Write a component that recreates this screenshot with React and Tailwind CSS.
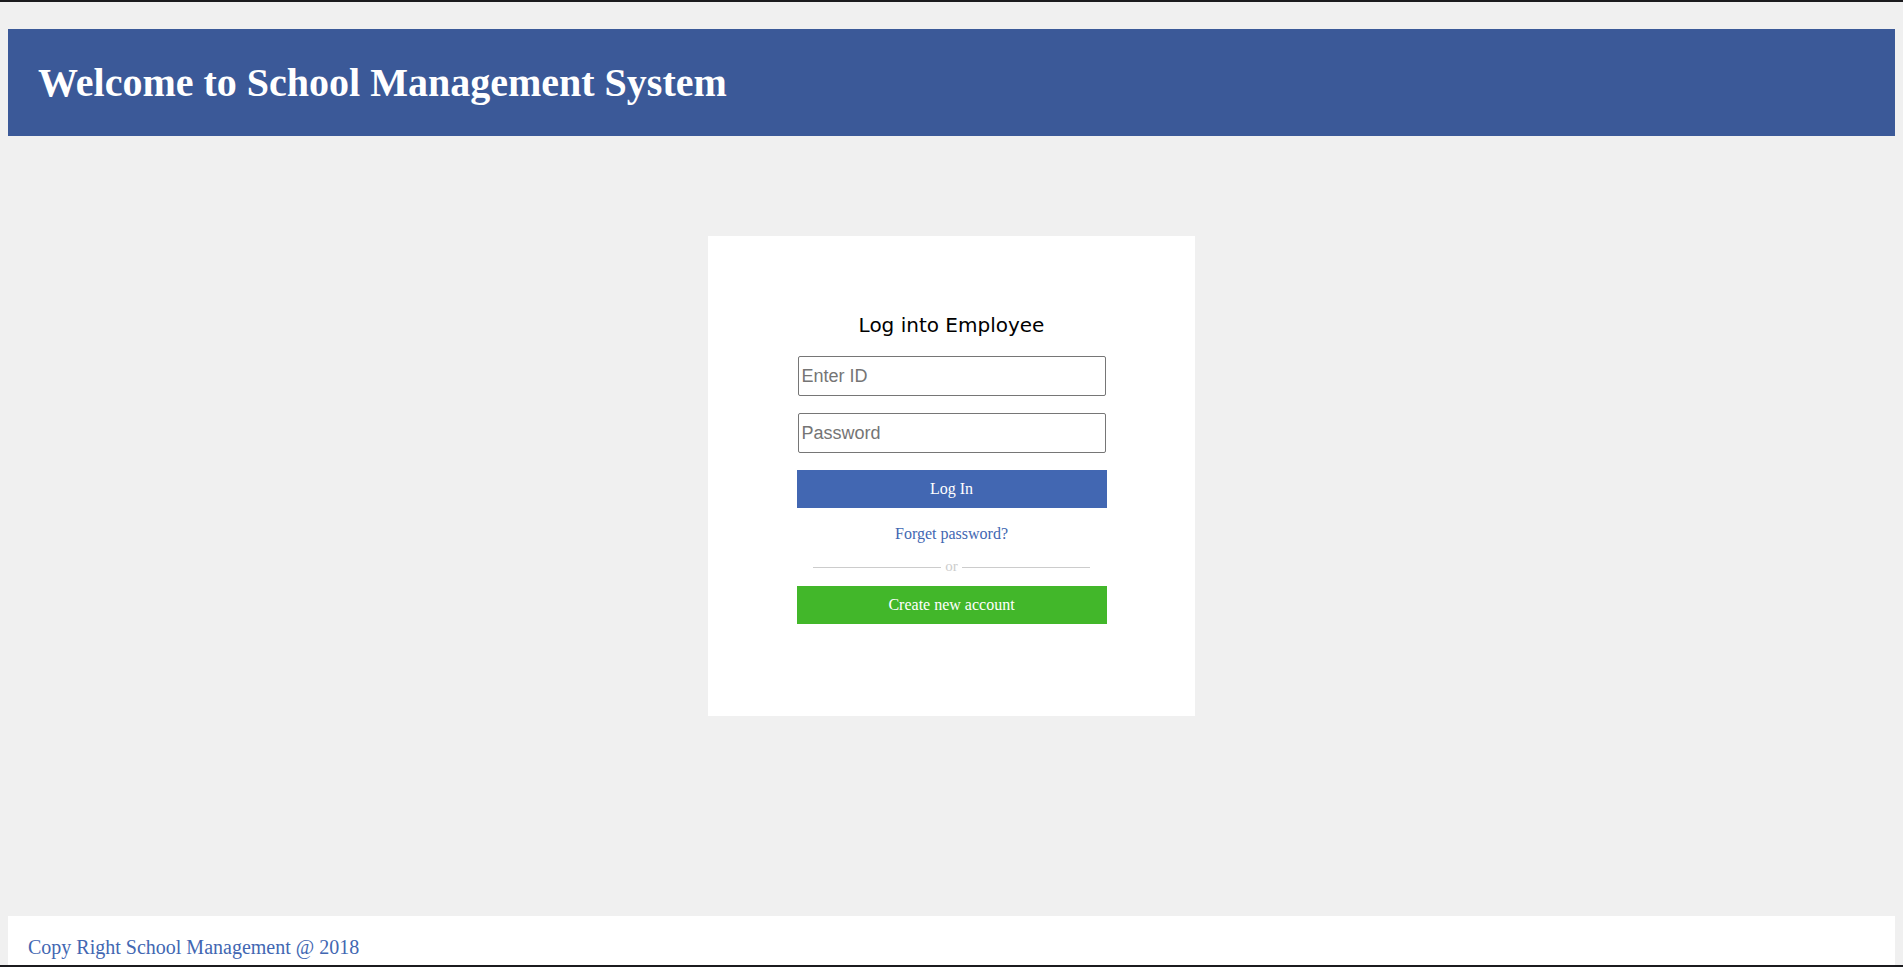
import React from 'react';

const serif = "font-['Liberation_Serif','Times_New_Roman',serif]";

export default function App() {
    return (
        <div className="h-screen flex flex-col bg-[#f0f0f0] overflow-hidden">
            {/* top edge */}
            <div className="h-[2px] bg-[#1b1b1e] shrink-0" />

            {/* Header */}
            <header className="mt-[27px] mx-[8px] h-[107px] shrink-0 bg-[#3b5998] pl-[30px] pt-[30px]">
                <h1 className={`${serif} text-[40px] leading-[48px] font-bold text-white`}>
                    Welcome to School Management System
                </h1>
            </header>

            {/* Login card */}
            <main className="flex-1 pt-[100px]">
                <div className="mx-auto w-[487px] h-[480px] bg-white flex flex-col items-center pt-[77px]">
                    <h2 className="font-['DejaVu_Sans',Verdana,sans-serif] text-[20px] leading-[24px] h-[24px] text-black">
                        Log into Employee
                    </h2>
                    <input
                        type="text"
                        placeholder="Enter ID"
                        className="mt-[19px] w-[308px] h-[40px] border border-[#767676] rounded-[2px] px-[3px] font-['Liberation_Sans',Arial,sans-serif] text-[18px] text-black placeholder:text-[#757575] bg-white outline-none"
                    />
                    <input
                        type="password"
                        placeholder="Password"
                        className="mt-[17px] w-[308px] h-[40px] border border-[#767676] rounded-[2px] px-[3px] font-['Liberation_Sans',Arial,sans-serif] text-[18px] text-black placeholder:text-[#757575] bg-white outline-none"
                    />
                    <button className={`mt-[17px] w-[310px] h-[38px] bg-[#4267b2] text-white ${serif} text-[16px]`}>
                        Log In
                    </button>
                    <a href="#" className={`mt-[16px] h-[20px] leading-[20px] ${serif} text-[16px] text-[#4267b2]`}>
                        Forget password?
                    </a>
                    <div className="mt-[13px] h-[20px] flex items-center">
                        <div className="w-[128px] h-px bg-[#cccccc]" />
                        <span className={`mx-[4px] ${serif} text-[15px] leading-none text-[#cccccc] -mt-[2px]`}>or</span>
                        <div className="w-[128px] h-px bg-[#cccccc]" />
                    </div>
                    <button className={`mt-[9px] w-[310px] h-[38px] bg-[#42b72a] text-white ${serif} text-[16px]`}>
                        Create new account
                    </button>
                </div>
            </main>

            {/* Footer */}
            <footer className="mx-[8px] h-[49px] shrink-0 bg-white pl-[20px] pt-[19px]">
                <p className={`${serif} text-[20px] leading-[24px] text-[#4267b2]`}>
                    Copy Right School Management @ 2018
                </p>
            </footer>
            <div className="h-[2px] bg-[#1b1b1e] shrink-0" />
        </div>
    );
}
